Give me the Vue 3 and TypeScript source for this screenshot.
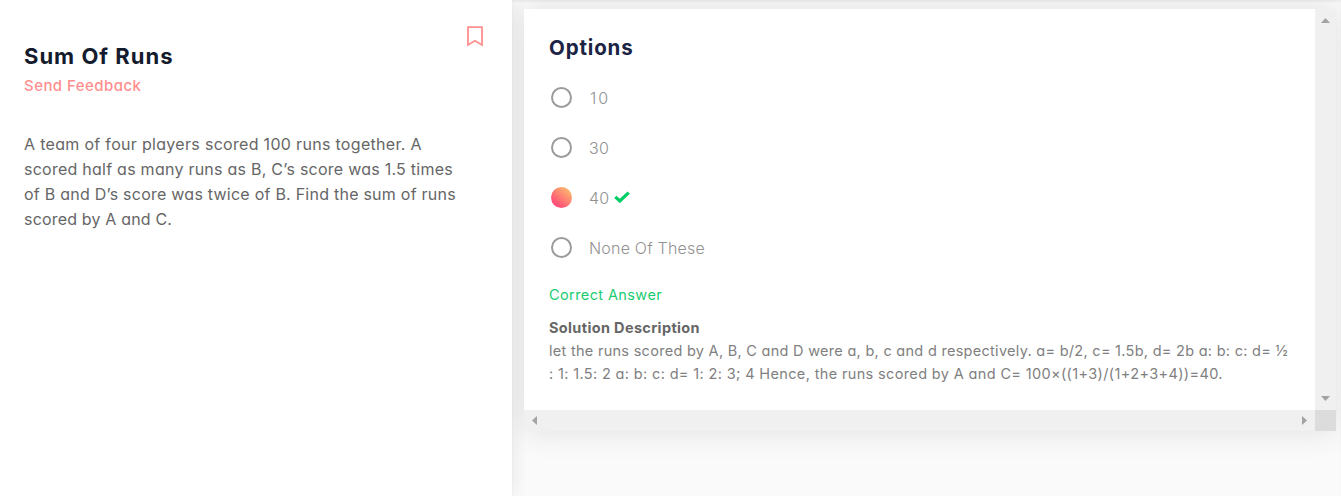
<script setup lang="ts">
import { ref } from 'vue'

const options: string[] = ['10', '30', '40', 'None Of These']
const selected = ref<number>(2)
const correct = 2
const question: string[] = [
  'A team of four players scored 100 runs together. A',
  'scored half as many runs as B, C’s score was 1.5 times',
  'of B and D’s score was twice of B. Find the sum of runs',
  'scored by A and C.',
]
const solution: string[] = [
  'let the runs scored by A, B, C and D were a, b, c and d respectively. a= b/2, c= 1.5b, d= 2b a: b: c: d= ½',
  ': 1: 1.5: 2 a: b: c: d= 1: 2: 3; 4 Hence, the runs scored by A and C= 100×((1+3)/(1+2+3+4))=40.',
]
</script>

<template>
  <main class="page">
    <section class="problem">
      <header class="problem-head">
        <div>
          <h1>Sum Of Runs</h1>
          <a class="feedback">Send Feedback</a>
        </div>
        <svg class="bookmark" width="18" height="22" viewBox="0 0 18 22">
          <path d="M2 2.2H16V20L9 15.8L2 20Z" fill="none" stroke="#ff8f8f" stroke-width="1.8" />
        </svg>
      </header>
      <p class="question">
        <span v-for="(line, i) in question" :key="i" :class="'q' + i">{{ line }}</span>
      </p>
    </section>
    <section class="answer">
      <div class="card">
        <div class="content">
          <h2>Options</h2>
          <ul>
            <li v-for="(o, i) in options" :key="o" @click="selected = i">
              <span class="radio" :class="{ on: selected === i }"></span>
              <span class="label" :class="'o' + i">{{ o }}</span>
              <svg v-if="i === correct" class="check" width="16" height="12" viewBox="0 0 16 12">
                <path d="M1.3 5.8L5.8 10L14.7 1.6" fill="none" stroke="#00cd64" stroke-width="3.2" />
              </svg>
            </li>
          </ul>
          <p class="verdict">Correct Answer</p>
          <h3>Solution Description</h3>
          <p class="solution">
            <span v-for="(line, i) in solution" :key="i" :class="'s' + i">{{ line }}</span>
          </p>
        </div>
        <div class="bar vertical">
          <svg width="9" height="5" viewBox="0 0 9 5"><path d="M0 5L4.5 0L9 5Z" /></svg>
          <svg width="9" height="5" viewBox="0 0 9 5"><path d="M0 0H9L4.5 5Z" /></svg>
        </div>
        <div class="bar horizontal">
          <svg width="5" height="9" viewBox="0 0 5 9"><path d="M5 0V9L0 4.5Z" /></svg>
          <svg width="5" height="9" viewBox="0 0 5 9"><path d="M0 0V9L5 4.5Z" /></svg>
        </div>
        <div class="corner"></div>
      </div>
    </section>
  </main>
</template>

<style>
body { background: #fafafa; overflow: hidden; }
</style>

<style scoped>
* { box-sizing: border-box; }
h1, h2, h3, p, ul { margin: 0; padding: 0; }
.page {
  display: flex;
  height: 496px;
  overflow: hidden;
  background: #fafafa;
  font-family: Inter, "Open Sans", sans-serif;
  font-feature-settings: "cv11", "calt" 0;
}
.problem {
  flex: none;
  width: 512px;
  padding: 0 24px;
  background: #fff;
  z-index: 1;
  clip-path: inset(0 -12px 0 0);
  box-shadow: 0 0 20px rgba(0, 0, 0, .09);
}
.problem-head { display: flex; justify-content: space-between; height: 132px; padding-top: 41px; }
h1 { font-size: 22px; font-weight: 650; line-height: 30px; letter-spacing: 1px; color: #141b2d; white-space: nowrap; }
.feedback { display: block; font-size: 15px; font-weight: 480; line-height: 30px; letter-spacing: .45px; color: #ff8f8f; }
.bookmark { margin: -16px 4px 0 0; }
.question { color: #666; font-size: 16px; font-weight: 370; line-height: 25px; }
.question span, .solution span { display: block; width: max-content; white-space: nowrap; }
.q0 { letter-spacing: .31px; }
.q1 { letter-spacing: .25px; }
.q2 { letter-spacing: .24px; }
.q3 { letter-spacing: .18px; }
.answer { flex: 1; padding: 9px 5px 0 12px; box-shadow: inset 0 2px 2px rgba(0, 0, 0, .05); }
.card {
  display: grid;
  grid-template-columns: 791px 21px;
  grid-template-rows: 401px 21px;
  width: 812px;
  background: #fff;
  box-shadow: 0 0 30px rgba(0, 0, 0, .11);
}
.content { padding: 24px 25px 0; }
h2 { font-size: 20.5px; font-weight: 650; line-height: 30px; letter-spacing: .85px; color: #1b2444; }
ul { list-style: none; padding-top: 9px; }
li { display: flex; align-items: center; height: 50px; }
.radio { width: 21px; height: 21px; margin: 0 17px 0 2px; border: 2px solid #9b9b9b; border-radius: 50%; }
.radio.on { border: 0; background: linear-gradient(40deg, #ff3d78 10%, #fbc56d 95%); }
.label { padding-top: 1px; font-size: 16px; font-weight: 300; color: #929292; letter-spacing: .2px; }
.o0 { padding-left: 1px; letter-spacing: 2px; }
.check { margin-left: 5px; }
.verdict { margin-top: 10px; font-size: 14.5px; font-weight: 380; line-height: 25px; letter-spacing: .4px; color: #18cc70; }
h3 { margin-top: 10px; font-size: 14.5px; font-weight: 650; line-height: 22px; letter-spacing: .35px; color: #666; }
.solution { font-size: 14.5px; font-weight: 370; line-height: 23px; color: #808080; }
.s0 { letter-spacing: .285px; }
.s1 { letter-spacing: .36px; }
.bar { display: flex; justify-content: space-between; align-items: center; background: #f0f0f0; }
.bar path { fill: #a3a3a3; }
.vertical { flex-direction: column; padding: 9px 0; }
.horizontal { padding: 0 8px; }
.corner { background: #dcdcdc; }
</style>
